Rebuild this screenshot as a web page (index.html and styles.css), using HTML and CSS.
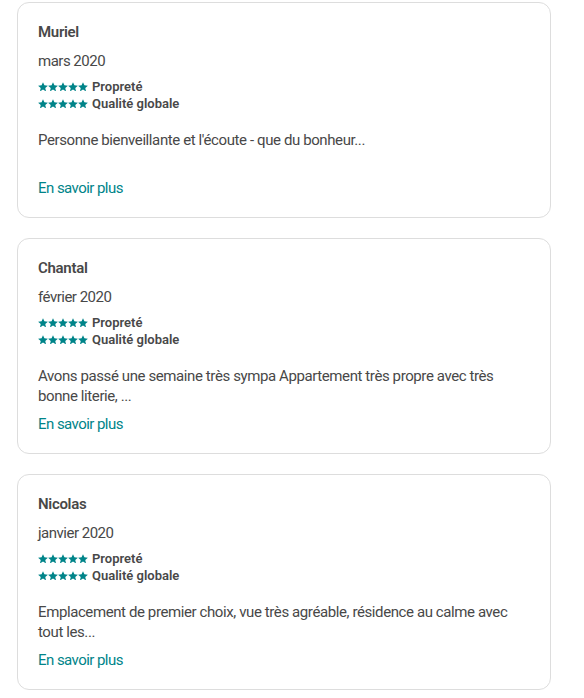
FILE: index.html
```html
<!DOCTYPE html>
<html lang="fr">
<head>
    <meta charset="UTF-8">
    <title>Avis</title>
    <link rel="stylesheet" href="styles.css">
</head>
<body>
    <svg class="defs" width="0" height="0">
        <symbol id="star" viewBox="1 1.2 22 21">
            <path d="M12 1.5l3.1 7.1 7.7.7-5.8 5.1 1.7 7.6L12 18l-6.7 4 1.7-7.6-5.8-5.1 7.7-.7z"/>
        </symbol>
    </svg>
    <div class="reviews">
        <div class="review-card">
            <div class="review-name">Muriel</div>
            <div class="review-date">mars 2020</div>
            <div class="ratings">
                <div class="rating-row">
                    <span class="stars"><svg><use href="#star"/></svg><svg><use href="#star"/></svg><svg><use href="#star"/></svg><svg><use href="#star"/></svg><svg><use href="#star"/></svg></span>
                    <span class="rating-label">Propreté</span>
                </div>
                <div class="rating-row">
                    <span class="stars"><svg><use href="#star"/></svg><svg><use href="#star"/></svg><svg><use href="#star"/></svg><svg><use href="#star"/></svg><svg><use href="#star"/></svg></span>
                    <span class="rating-label">Qualité globale</span>
                </div>
            </div>
            <p class="review-text">Personne bienveillante et l'écoute - que du bonheur...</p>
            <a class="read-more" href="#">En savoir plus</a>
        </div>
        <div class="review-card">
            <div class="review-name">Chantal</div>
            <div class="review-date">février 2020</div>
            <div class="ratings">
                <div class="rating-row">
                    <span class="stars"><svg><use href="#star"/></svg><svg><use href="#star"/></svg><svg><use href="#star"/></svg><svg><use href="#star"/></svg><svg><use href="#star"/></svg></span>
                    <span class="rating-label">Propreté</span>
                </div>
                <div class="rating-row">
                    <span class="stars"><svg><use href="#star"/></svg><svg><use href="#star"/></svg><svg><use href="#star"/></svg><svg><use href="#star"/></svg><svg><use href="#star"/></svg></span>
                    <span class="rating-label">Qualité globale</span>
                </div>
            </div>
            <p class="review-text">Avons passé une semaine très sympa Appartement très propre avec très bonne literie, ...</p>
            <a class="read-more" href="#">En savoir plus</a>
        </div>
        <div class="review-card">
            <div class="review-name">Nicolas</div>
            <div class="review-date">janvier 2020</div>
            <div class="ratings">
                <div class="rating-row">
                    <span class="stars"><svg><use href="#star"/></svg><svg><use href="#star"/></svg><svg><use href="#star"/></svg><svg><use href="#star"/></svg><svg><use href="#star"/></svg></span>
                    <span class="rating-label">Propreté</span>
                </div>
                <div class="rating-row">
                    <span class="stars"><svg><use href="#star"/></svg><svg><use href="#star"/></svg><svg><use href="#star"/></svg><svg><use href="#star"/></svg><svg><use href="#star"/></svg></span>
                    <span class="rating-label">Qualité globale</span>
                </div>
            </div>
            <p class="review-text">Emplacement de premier choix, vue très agréable, résidence au calme avec tout les...</p>
            <a class="read-more" href="#">En savoir plus</a>
        </div>
    </div>
</body>
</html>
```

FILE: styles.css
```css
body {
    margin: 0;
    font-family: Roboto, "Liberation Sans", sans-serif;
    color: #484848;
    background: #fff;
}
.defs {
    position: absolute;
}
.reviews {
    display: flex;
    flex-direction: column;
    gap: 20px;
    width: 534px;
    padding: 2px 0 0 17px;
}
.review-card {
    display: flex;
    flex-direction: column;
    align-items: flex-start;
    padding: 19px 20px 19px;
    border: 1px solid #dddddd;
    border-radius: 12px;
}
.review-name {
    font-size: 15px;
    font-weight: 600;
    line-height: 20px;
    letter-spacing: -0.3px;
}
.review-date {
    margin-top: 9px;
    font-size: 15px;
    line-height: 20px;
    letter-spacing: -0.5px;
}
.ratings {
    margin-top: 7px;
}
.rating-row {
    display: flex;
    align-items: center;
    height: 17px;
    font-size: 13px;
    font-weight: 600;
}
.stars {
    display: flex;
    margin-right: 4px;
    fill: #008489;
}
.stars svg {
    width: 10px;
    height: 9.5px;
}
.review-text {
    margin: 18px 0 0;
    min-height: 40px;
    font-size: 15px;
    line-height: 20px;
    letter-spacing: -0.4px;
}
.read-more {
    margin-top: 8px;
    font-size: 15px;
    line-height: 20px;
    letter-spacing: -0.55px;
    color: #008489;
    text-decoration: none;
}
```
